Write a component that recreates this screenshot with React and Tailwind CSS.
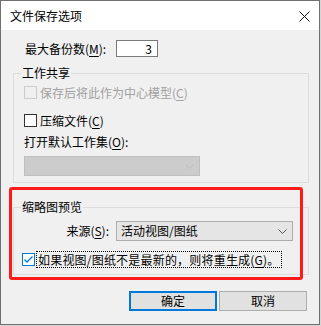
import React from 'react';

const U = ({ children }) => (
  <span className="underline underline-offset-[2px] decoration-[1px]">{children}</span>
);

const Chevron = ({ color }) => (
  <svg width="9" height="5" viewBox="0 0 9 5" fill="none">
    <path d="M0.5 0.5 L4.5 4.5 L8.5 0.5" stroke={color} strokeWidth="1" />
  </svg>
);

const Check = () => (
  <svg width="11" height="11" viewBox="0 0 11 11" fill="none">
    <path d="M1.5 5.5 L4 8 L9.5 2.5" stroke="#0078d7" strokeWidth="1.3" />
  </svg>
);

const App = () => {
  return (
    <div className="relative w-[321px] h-[326px] bg-[#d6d6d6] font-['Noto_Sans_CJK_SC',sans-serif] text-[12px] text-black">
      <div className="w-[320px] h-[325px] border border-[#707070] bg-[#f0f0f0] flex flex-col">
        {/* Title bar */}
        <div className="h-[29px] bg-white flex items-center justify-between pl-[9px] pr-[9px] pt-[1px]">
          <span className="text-[12px] leading-none">文件保存选项</span>
          <svg width="11" height="11" viewBox="0 0 11 11" fill="none">
            <path d="M0.5 0.5 L10.5 10.5 M10.5 0.5 L0.5 10.5" stroke="#111" strokeWidth="1" />
          </svg>
        </div>

        {/* Max backups */}
        <div className="mt-[10px] h-[17px] flex items-center pl-[24px]">
          <span className="w-[91px] leading-none">最大备份数(<U>M</U>):</span>
          <div className="w-[42px] h-[17px] border border-[#7a7a7a] bg-white flex items-center justify-end pr-[5px] leading-none">
            3
          </div>
        </div>

        {/* Worksharing group */}
        <div className="relative mt-[16px] ml-[12px] w-[296px] h-[110px] border border-[#dcdcdc] pt-[12px] pl-[10px]">
          <span className="absolute left-[7px] -top-[9px] px-[1px] bg-[#f0f0f0] leading-[16px]">工作共享</span>

          <div className="flex items-center h-[13px] gap-[3px]">
            <div className="w-[13px] h-[13px] border border-[#cccccc] bg-[#f0f0f0]" />
            <span className="text-[#a0a0a0] leading-none">保存后将此作为中心模型(<U>C</U>)</span>
          </div>

          <div className="mt-[15px] flex items-center h-[13px] gap-[3px]">
            <div className="w-[13px] h-[13px] border border-[#333333] bg-white" />
            <span className="leading-none">压缩文件(<U>C</U>)</span>
          </div>

          <div className="mt-[7px] h-[15px] flex items-center">
            <span className="leading-none">打开默认工作集(<U>O</U>):</span>
          </div>

          <div className="mt-[7px] w-[176px] h-[20px] border border-[#bfbfbf] bg-[#cccccc] flex items-center justify-end pr-[5px]">
            <Chevron color="#bcbcbc" />
          </div>
        </div>

        {/* Thumbnail preview group */}
        <div className="relative mt-[24px] ml-[12px] w-[296px] h-[68px] border border-[#dcdcdc] pt-[13px]">
          <span className="absolute left-[7px] -top-[9px] px-[1px] bg-[#f0f0f0] leading-[16px]">缩略图预览</span>

          <div className="h-[20px] flex items-center">
            <span className="w-[102px] text-right pr-[7px] leading-none">来源(<U>S</U>):</span>
            <div className="w-[177px] h-[20px] border border-[#adadad] bg-[#e5e5e5] flex items-center justify-between pl-[4px] pr-[5px]">
              <span className="leading-none">活动视图/图纸</span>
              <Chevron color="#555555" />
            </div>
          </div>

          <div className="mt-[10px] pl-[8px] flex items-center h-[17px]">
            <div className="w-[13px] h-[13px] border border-[#0078d7] bg-white flex items-center justify-center">
              <Check />
            </div>
            <span className="ml-[1px] h-[17px] border border-dotted border-black flex items-center px-[1px] leading-none tracking-[0.2px]">
              如果视图/图纸不是最新的，则将重生成(<U>G</U>)。
            </span>
          </div>
        </div>

        {/* Buttons */}
        <div className="mt-[16px] flex pl-[128px] gap-[2px]">
          <button className="w-[88px] h-[20px] border-2 border-[#0078d7] bg-[#e1e1e1] flex items-center justify-center leading-none">
            确定
          </button>
          <button className="w-[88px] h-[20px] border border-[#adadad] bg-[#e1e1e1] flex items-center justify-center leading-none">
            取消
          </button>
        </div>
      </div>

      {/* Red annotation */}
      <div className="absolute left-[9px] top-[187px] w-[294px] h-[93px] border-[3px] border-[#ff1a1a] rounded-[3px] pointer-events-none" />
    </div>
  );
};

export default App;
